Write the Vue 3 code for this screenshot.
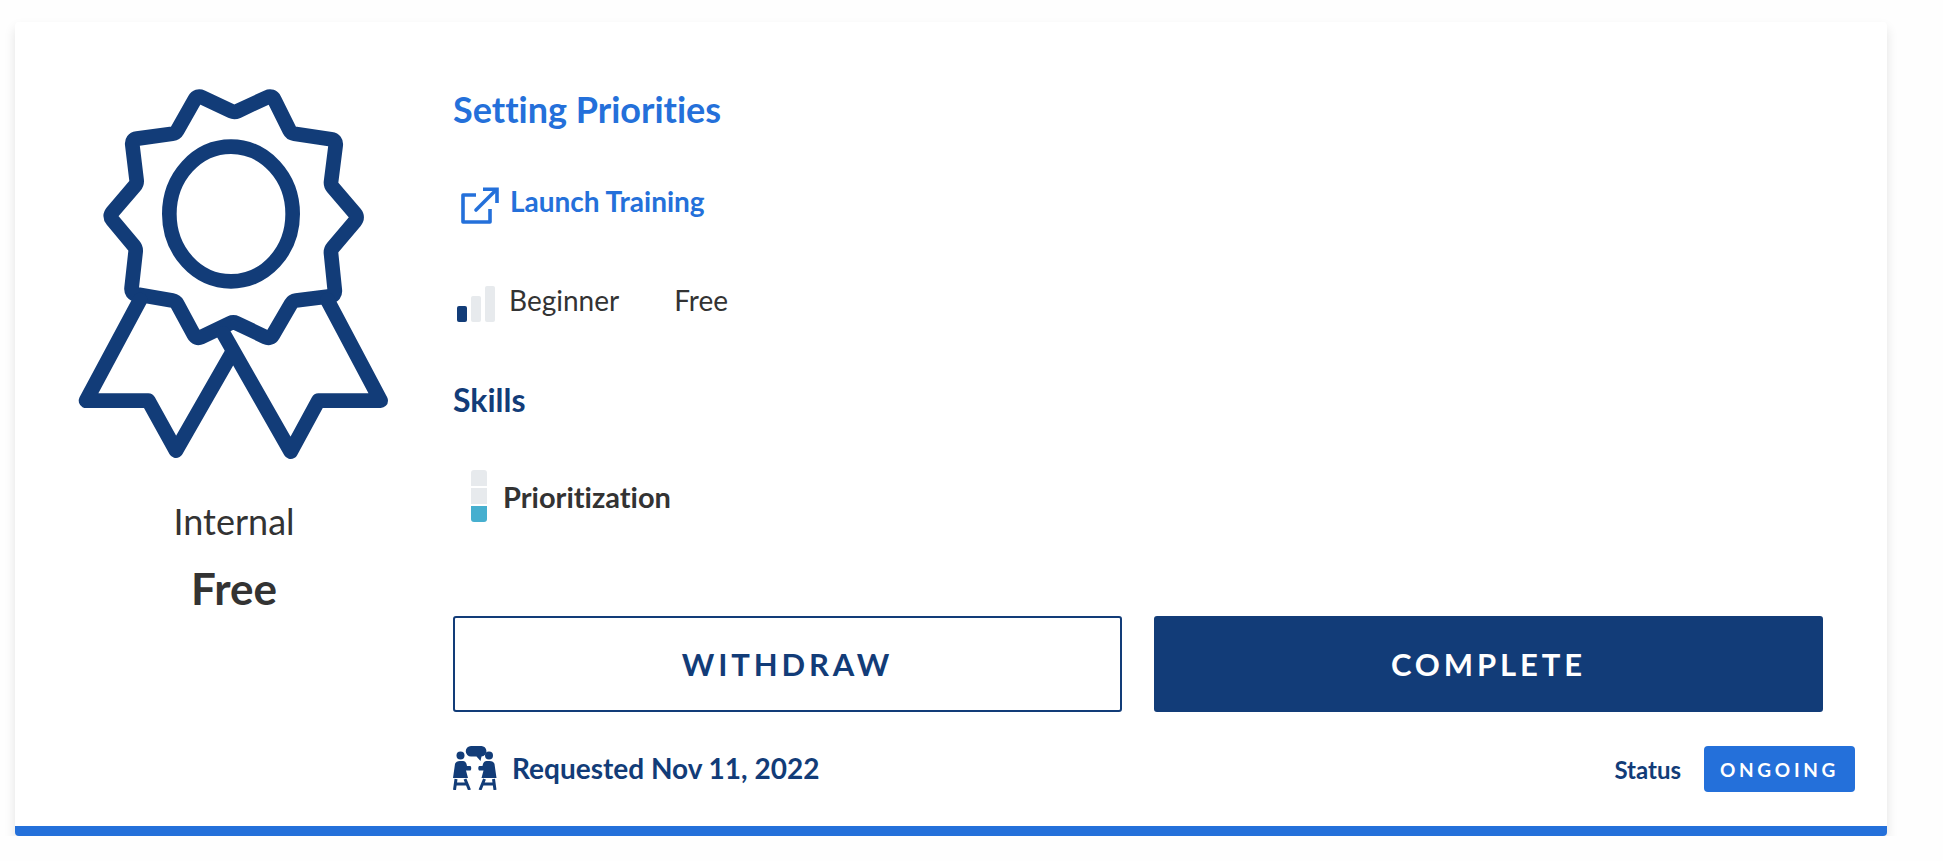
<template>
  <div class="card">
    <div class="card-body">
      <!-- Left column with the badge -->
      <div class="side">
        <svg class="medal" viewBox="216 240 975 1155" fill="none" stroke="#123c78" stroke-width="44" stroke-linejoin="round" stroke-linecap="round">
          <path :d="starPath" />
          <ellipse cx="693" cy="642" rx="185" ry="202" />
          <path d="M420 900 L258 1202 L445 1202 L528 1352 L695 1060" />
          <path d="M670 1000 L872 1355 L955 1202 L1142 1202 L982 900" />
        </svg>
        <div class="provider">Internal</div>
        <div class="price">Free</div>
      </div>

      <!-- Course details -->
      <div class="content">
        <a class="title">Setting Priorities</a>
        <a class="launch">
          <svg class="launch-icon" viewBox="0 0 38 38" fill="none" stroke="#2470da" stroke-width="3.6">
            <path d="M15 8 H2 V35 H29 V22" stroke-linejoin="round" />
            <path d="M15 23 L35 3" stroke-linecap="round" />
            <path d="M22 2.2 H36 V16" />
          </svg>
          <span>Launch Training</span>
        </a>
        <div class="meta">
          <div class="level-bars">
            <span v-for="(h, i) in levelBars" :key="i" :class="{ on: i === 0 }" :style="{ height: h + 'px' }"></span>
          </div>
          <span class="level">Beginner</span>
          <span>Free</span>
        </div>
        <div class="skills-label">Skills</div>
        <div class="skill">
          <div class="gauge">
            <span></span>
            <span></span>
            <span class="on"></span>
          </div>
          <span>Prioritization</span>
        </div>

        <div class="actions">
          <button class="btn outline">WITHDRAW</button>
          <button class="btn solid">COMPLETE</button>
        </div>

        <div class="footer">
          <div class="requested">
            <svg class="people" viewBox="0 0 44 44" fill="#123c78">
              <path d="M18 0 H28 A5.2 5.2 0 0 1 28.500 10.400 L27.500 15 L23.500 10.500 H18 A5.250 5.250 0 0 1 18 0 Z" />
              <g v-for="t in sitters" :key="t" :transform="t">
                <circle cx="7.500" cy="9.500" r="4" />
                <path d="M2 18 Q3 15 7 15 H10 Q12.500 15 13.500 18 L14 20 H17.500 Q19 22 17.500 24.500 H13 L15 32 H0 Z" />
                <path d="M3 33 L1.500 44 M12 33 L16.500 44 M3 38 H14" fill="none" stroke="#123c78" stroke-width="3" />
              </g>
            </svg>
            <span>Requested Nov 11, 2022</span>
          </div>
          <div class="status">
            <span>Status</span>
            <span class="badge">ONGOING</span>
          </div>
        </div>
      </div>
    </div>
  </div>
</template>

<script setup>
const levelBars = [16, 26, 36];
const sitters = ['matrix(1 0 0 1 0 0)', 'matrix(-1 0 0 1 43.5 0)'];

// Outline of the rosette, corners get rounded below
const starPoints = [
  [703, 338], [816, 285], [873, 400], [1009, 420], [992, 555],
  [1075, 652], [992, 750], [1006, 887], [878, 903], [811, 1018],
  [700, 965], [589, 1018], [527, 903], [393, 880], [408, 745],
  [327, 648], [411, 550], [395, 418], [527, 400], [592, 285],
];

// Tips (odd points) are rounder than the notches between them
const roundedPath = (points) => {
  const towards = (a, b, cut) => {
    const len = Math.hypot(b[0] - a[0], b[1] - a[1]);
    return [a[0] + ((b[0] - a[0]) * cut) / len, a[1] + ((b[1] - a[1]) * cut) / len];
  };
  return points
    .map((p, i) => {
      const cut = i % 2 ? 16 : 10;
      const prev = points[(i + points.length - 1) % points.length];
      const next = points[(i + 1) % points.length];
      const start = towards(p, prev, cut);
      const end = towards(p, next, cut);
      return `${i === 0 ? 'M' : 'L'}${start[0]} ${start[1]} Q${p[0]} ${p[1]} ${end[0]} ${end[1]}`;
    })
    .join(' ') + ' Z';
};

const starPath = roundedPath(starPoints);
</script>

<style>
body {
  background: #fefefe;
}
</style>

<style scoped>
.card {
  box-sizing: border-box;
  width: 1872px;
  height: 814px;
  margin: 22px 0 0 15px;
  background: #fff;
  border-bottom: 10px solid #2470da;
  border-radius: 4px;
  box-shadow: 0 6px 12px rgba(0, 0, 0, 0.11);
  font-family: Lato, "Open Sans", sans-serif;
  font-variant-ligatures: none;
  color: #333;
}

.card-body {
  display: flex;
  height: 100%;
}

/* Left column */
.side {
  width: 438px;
  flex: none;
  display: flex;
  flex-direction: column;
  align-items: center;
  padding-top: 58px;
  box-sizing: border-box;
}

.medal {
  width: 325px;
  height: 385px;
}

.provider {
  margin-top: 35px;
  font-size: 36px;
  line-height: 42px;
}

.price {
  margin-top: 20px;
  font-size: 44px;
  line-height: 52px;
  font-weight: 700;
}

/* Right column */
.content {
  flex: 1;
  padding: 65px 32px 0 0;
  display: flex;
  flex-direction: column;
  align-items: flex-start;
}

.title {
  font-size: 36px;
  line-height: 44px;
  font-weight: 700;
  color: #2470da;
}

.launch {
  display: flex;
  align-items: flex-start;
  gap: 11px;
  margin: 51px 0 0 8px;
  font-size: 28px;
  line-height: 38px;
  font-weight: 700;
  color: #2470da;
}

.launch-icon {
  width: 38px;
  height: 38px;
  flex: none;
  margin-top: 5px;
}

.meta {
  display: flex;
  align-items: flex-start;
  margin: 57px 0 0 4px;
  font-size: 28px;
  line-height: 36px;
}

.level-bars {
  display: flex;
  align-items: flex-end;
  gap: 4px;
  height: 36px;
  margin: 4px 14px 0 0;
}

.level-bars span {
  width: 10px;
  background: #e7eaed;
  border-radius: 2px;
}

.level-bars span.on {
  background: #123c78;
}

.level {
  margin-right: 55px;
}

.skills-label {
  margin-top: 59px;
  font-size: 32px;
  line-height: 38px;
  font-weight: 700;
  color: #123c78;
}

.skill {
  display: flex;
  align-items: center;
  gap: 16px;
  margin: 51px 0 0 18px;
  font-size: 29px;
  font-weight: 700;
}

.gauge {
  display: flex;
  flex-direction: column;
  gap: 2px;
  width: 16px;
}

.gauge span {
  height: 16px;
  background: #e7eaed;
}

.gauge span:first-child {
  border-radius: 3px 3px 0 0;
}

.gauge span.on {
  background: #46afcf;
  border-radius: 0 0 3px 3px;
}

.actions {
  display: flex;
  gap: 32px;
  margin-top: 94px;
}

.btn {
  width: 669px;
  height: 96px;
  box-sizing: border-box;
  border-radius: 3px;
  font-family: inherit;
  font-variant-ligatures: none;
  font-size: 31px;
  font-weight: 700;
  letter-spacing: 3.900px;
}

.btn.outline {
  background: #fff;
  border: 2px solid #123c78;
  color: #123c78;
}

.btn.solid {
  background: #123c78;
  border: 2px solid #123c78;
  color: #fff;
}

.footer {
  align-self: stretch;
  display: flex;
  justify-content: space-between;
  align-items: center;
  margin-top: 32px;
  color: #123c78;
  font-weight: 700;
}

.requested {
  display: flex;
  align-items: center;
  gap: 15px;
  font-size: 28px;
}

.people {
  width: 44px;
  height: 44px;
}

.status {
  display: flex;
  align-items: center;
  gap: 23px;
  margin-top: 2px;
  font-size: 24px;
}

.badge {
  width: 151px;
  height: 46px;
  display: flex;
  align-items: center;
  justify-content: center;
  background: #2470da;
  border-radius: 4px;
  color: #fff;
  font-size: 19px;
  letter-spacing: 3.700px;
}
</style>
